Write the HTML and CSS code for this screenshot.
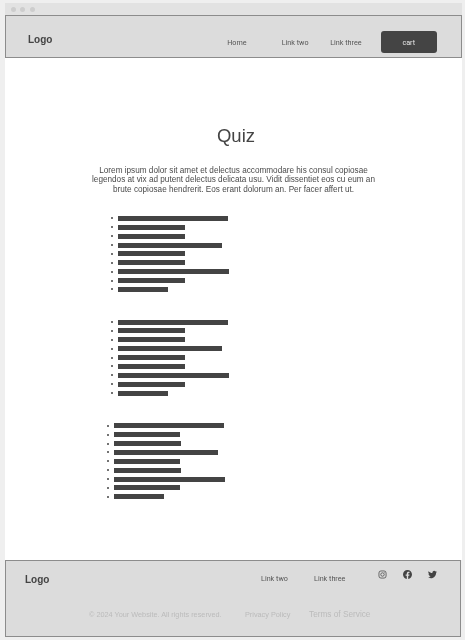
FILE: index.html
```html
<!DOCTYPE html>
<html lang="en">
<head>
<meta charset="utf-8">
<title>Quiz</title>
<link rel="stylesheet" href="styles.css">
</head>
<body>
<div class="window">
  <div class="titlebar"><span class="dot"></span><span class="dot"></span><span class="dot"></span></div>
  <header class="header">
    <div class="logo">Logo</div>
    <nav class="nav">
      <a class="nav-home">Home</a>
      <a class="nav-two">Link two</a>
      <a class="nav-three">Link three</a>
    </nav>
    <button class="cart">cart</button>
  </header>
  <main class="main">
    <h1 class="title">Quiz</h1>
    <p class="intro">Lorem ipsum dolor sit amet et delectus accommodare his consul copiosae legendos at vix ad putent delectus delicata usu. Vidit dissentiet eos cu eum an brute copiosae hendrerit. Eos erant dolorum an. Per facer affert ut.</p>
    <ul class="list">
      <li><span class="bar b1"></span></li><li><span class="bar b2"></span></li><li><span class="bar b3"></span></li>
      <li><span class="bar b4"></span></li><li><span class="bar b2"></span></li><li><span class="bar b3"></span></li>
      <li><span class="bar b5"></span></li><li><span class="bar b2"></span></li><li><span class="bar b6"></span></li>
    </ul>
    <ul class="list">
      <li><span class="bar b1"></span></li><li><span class="bar b2"></span></li><li><span class="bar b3"></span></li>
      <li><span class="bar b4"></span></li><li><span class="bar b2"></span></li><li><span class="bar b3"></span></li>
      <li><span class="bar b5"></span></li><li><span class="bar b2"></span></li><li><span class="bar b6"></span></li>
    </ul>
    <ul class="list list-shifted">
      <li><span class="bar b1"></span></li><li><span class="bar b2"></span></li><li><span class="bar b3"></span></li>
      <li><span class="bar b4"></span></li><li><span class="bar b2"></span></li><li><span class="bar b3"></span></li>
      <li><span class="bar b5"></span></li><li><span class="bar b2"></span></li><li><span class="bar b6"></span></li>
    </ul>
  </main>
  <footer class="footer">
    <div class="footer-top">
      <div class="logo">Logo</div>
      <nav class="footer-nav">
        <a class="fn-two">Link two</a>
        <a class="fn-three">Link three</a>
      </nav>
      <div class="social">
        <svg class="icon" viewBox="0 0 24 24" fill="none" stroke="#444" stroke-width="2"><rect x="2.5" y="2.5" width="19" height="19" rx="5.5"/><circle cx="12" cy="12" r="4.6"/><circle cx="17.5" cy="6.5" r="1" fill="#444" stroke="none"/></svg>
        <svg class="icon" viewBox="0 0 24 24" fill="#444"><path d="M24 12.07C24 5.4 18.63 0 12 0S0 5.4 0 12.07c0 6.03 4.39 11.02 10.13 11.93v-8.44H7.08v-3.49h3.05V9.41c0-3.02 1.79-4.69 4.53-4.69 1.31 0 2.68.24 2.68.24v2.97h-1.51c-1.49 0-1.96.93-1.96 1.89v2.25h3.33l-.53 3.49h-2.8V24C19.61 23.09 24 18.1 24 12.07z"/></svg>
        <svg class="icon" viewBox="0 0 24 24" fill="#444"><path d="M24 4.56c-.88.39-1.83.66-2.83.78 1.02-.61 1.8-1.58 2.17-2.72-.95.56-2.01.97-3.13 1.19A4.92 4.92 0 0 0 11.83 8.3C7.74 8.1 4.12 6.14 1.67 3.15a4.93 4.93 0 0 0 1.52 6.57c-.8-.03-1.56-.25-2.23-.62v.06a4.92 4.92 0 0 0 3.95 4.83c-.72.2-1.48.22-2.22.08a4.93 4.93 0 0 0 4.6 3.42A9.87 9.87 0 0 1 0 19.54a13.94 13.94 0 0 0 7.55 2.21c9.06 0 14.01-7.5 14.01-14.01 0-.21 0-.42-.02-.63A9.94 9.94 0 0 0 24 4.56z"/></svg>
      </div>
    </div>
    <div class="footer-bottom">
      <span class="copyright">© 2024 Your Website. All rights reserved.</span>
      <a class="privacy">Privacy Policy</a>
      <a class="terms">Terms of Service</a>
    </div>
  </footer>
</div>
</body>
</html>
```
FILE: styles.css
```css
* { box-sizing: border-box; }
html, body { margin: 0; padding: 0; }
body {
  width: 465px;
  height: 640px;
  background: #efefef;
  font-family: "Liberation Sans", Arial, sans-serif;
  color: #444;
  overflow: hidden;
}
.window {
  margin: 3px 0 0 5px;
  width: 457px;
  height: 634px;
  display: flex;
  flex-direction: column;
  filter: blur(.3px);
}
.titlebar {
  height: 12px;
  flex: none;
  background: #e2e2e2;
  display: flex;
  align-items: center;
  gap: 4.8px;
  padding-left: 5.5px;
}
.dot { width: 5px; height: 5px; border-radius: 50%; background: #cdcdcd; }
.header {
  height: 43px;
  flex: none;
  background: #dcdcdc;
  border: 1px solid #8c8c8c;
  display: flex;
  align-items: center;
  padding-left: 22px;
}
.logo { font-size: 10px; font-weight: 700; color: #444; }
.header .logo { padding-top: 6px; }
.nav {
  margin-left: 174.8px;
  display: flex;
  font-family: Roboto, sans-serif;
  font-size: 7.2px;
  color: #555;
  padding-top: 11px;
}
.nav-home { width: 54.5px; }
.nav-two { width: 48.5px; }
.nav-three { width: 50.5px; }
.cart {
  width: 56px;
  height: 22px;
  margin-top: 10px;
  border: 0;
  border-radius: 3px;
  background: #444;
  color: #e8e8e8;
  font-family: Roboto, sans-serif;
  font-size: 7.2px;
  padding: 2px 0 0;
}
.main { flex: 1; padding: 66px 2px 0 0; background: #fff; }
.title {
  margin: 0;
  padding-left: 7px;
  text-align: center;
  font-size: 18.5px;
  line-height: 24px;
  font-weight: 400;
  color: #444;
}
.intro {
  margin: 18px 0 0 0;
  padding: 0 82px 0 84px;
  text-align: center;
  font-size: 8.2px;
  line-height: 9.3px;
  color: #4a4a4a;
}
.list {
  margin: 20px 0 0 0;
  padding: 0 0 0 106px;
  list-style: none;
}
.list + .list { margin-top: 23.7px; }
.list-shifted { padding-left: 101.5px; }
.list li {
  height: 8.9px;
  display: flex;
  align-items: center;
  gap: 5px;
}
.list li::before {
  content: "";
  flex: none;
  width: 2px;
  height: 2px;
  border-radius: 50%;
  background: #444;
}
.bar { display: block; height: 5px; background: #444; }
.b1 { width: 110px; }
.b2 { width: 66.5px; }
.b3 { width: 67px; }
.b4 { width: 104px; }
.b5 { width: 111px; }
.b6 { width: 50px; }
.footer {
  height: 77px;
  flex: none;
  margin-right: 1px;
  background: #dcdcdc;
  border: 1px solid #8c8c8c;
  padding: 0 0 0 19px;
  display: flex;
  flex-direction: column;
}
.footer-top { display: flex; height: 30px; align-items: center; }
.footer-top .logo { padding-top: 7px; }
.footer-nav {
  margin-left: 211.6px;
  display: flex;
  font-family: Roboto, sans-serif;
  font-size: 7.2px;
  color: #555;
  padding-top: 4px;
}
.fn-two { width: 53px; }
.fn-three { width: 52px; }
.social { margin-left: 12px; display: flex; gap: 16px; padding-bottom: 4px; }
.icon { width: 9px; height: 9px; display: block; }
.footer-bottom {
  margin-top: 16px;
  padding-left: 64px;
  display: flex;
  align-items: center;
  color: #bbb;
  font-size: 7.3px;
  height: 14px;
}
.copyright { width: 156px; }
.privacy { width: 64px; }
.terms { font-size: 8.25px; }
```
